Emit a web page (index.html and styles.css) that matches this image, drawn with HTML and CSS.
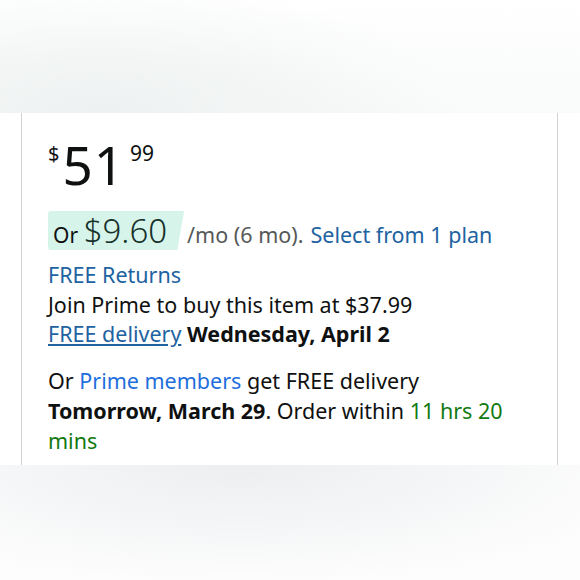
FILE: index.html
```html
<!DOCTYPE html>
<html>
<head>
<meta charset="utf-8">
<link rel="stylesheet" href="styles.css">
</head>
<body>
<div class="top-band"></div>
<div class="panel">
  <div class="price">
    <span class="cur">$</span><span class="whole">51</span><span class="frac">99</span>
  </div>
  <div class="monthly">
    <span class="hl"><span class="or">Or</span> <span class="amt">$9.60</span></span>
    <span class="mo">/mo (6 mo).</span>
    <a class="link">Select from 1 plan</a>
  </div>
  <div class="info">
    <div><a class="link">FREE Returns</a></div>
    <div>Join Prime to buy this item at $37.99</div>
    <div><a class="link ul">FREE delivery</a> <b>Wednesday, April 2</b></div>
  </div>
  <div class="prime">
    Or <a class="pl">Prime members</a> get FREE delivery <b>Tomorrow, March 29</b>. Order within <span class="green">11 hrs 20</span> <span class="green">mins</span>
  </div>
</div>
<div class="bottom-band"></div>
</body>
</html>
```
FILE: styles.css
```css
html, body {
  margin: 0;
  padding: 0;
  background: #ffffff;
  font-family: "Noto Sans", "Open Sans", sans-serif;
  color: #0f1111;
}
.top-band {
  height: 113px;
  background:
    radial-gradient(ellipse 360px 130px at 100px 110px, #eef1f1 0%, rgba(255,255,255,0) 100%),
    linear-gradient(180deg, #ffffff 0%, #f9fafa 100%);
}
.bottom-band {
  height: 115px;
  background:
    radial-gradient(ellipse 420px 120px at 240px 0px, #eceef0 0%, rgba(255,255,255,0) 100%),
    #fdfdfd;
}
.panel {
  margin-left: 21px;
  width: 537px;
  height: 352px;
  box-sizing: border-box;
  border-left: 1px solid #d0d2d2;
  border-right: 1px solid #d0d2d2;
  padding: 25px 0 0 26px;
  background: #fff;
}
.price {
  display: flex;
  align-items: flex-start;
  line-height: 1;
}
.cur {
  font-size: 20px;
  margin-top: 6px;
  margin-right: 3px;
}
.whole {
  font-size: 53px;
  letter-spacing: 1px;
}
.frac {
  font-size: 21px;
  margin-top: 5px;
  margin-left: 5px;
}
.monthly {
  margin-top: 20px;
  display: flex;
  align-items: baseline;
  font-size: 21.5px;
  color: #565959;
}
.hl {
  display: inline-block;
  background: #d6f4ea;
  clip-path: polygon(0 0, 100% 0, 95% 100%, 0 100%);
  padding: 0 17px 0 5px;
  height: 39px;
  line-height: 39px;
  border-radius: 3px 0 0 3px;
  color: #0f1111;
}
.or {
  font-size: 21px;
}
.amt {
  font-size: 33px;
  font-weight: 300;
  color: #16302a;
}
.mo {
  margin-left: 3px;
}
.link {
  color: #2162a1;
  margin-left: 7px;
}
.info .link { margin-left: 0; }
.ul { text-decoration: underline; }
.info {
  margin-top: 10px;
  font-size: 21.5px;
  line-height: 29.5px;
}
.info b { font-weight: 700; }
.prime {
  margin-top: 17px;
  font-size: 21.5px;
  line-height: 30px;
  width: 465px;
}
.pl { color: #1f6fde; }
.green { color: #107a10; }
```
